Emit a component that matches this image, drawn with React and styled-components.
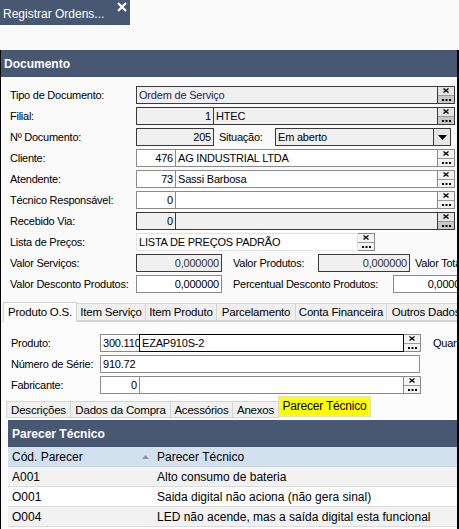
import React from 'react';
import styled, { createGlobalStyle } from 'styled-components';

const Global = createGlobalStyle`
  html, body { margin: 0; padding: 0; background: #fafafa; }
  body { font-family: "Liberation Sans", Arial, sans-serif; }
  * { box-sizing: border-box; }
`;

const SLATE = '#485872';

const Screen = styled.div`
  width: 459px;
  height: 529px;
  overflow: hidden;
  background: #fafafa;
  display: flex;
  flex-direction: column;
`;

const TopStrip = styled.div`
  height: 25px;
  flex-shrink: 0;
  display: flex;
  background: #fafafa;
`;

const DocTab = styled.div`
  position: relative;
  width: 130px;
  background: ${SLATE};
  color: #fff;
  font-size: 12px;
  display: flex;
  align-items: center;
  padding-left: 3px;
  padding-top: 2px;
`;

const CloseIcon = styled.svg`
  position: absolute;
  top: 2px;
  right: 3px;
`;

const Spacer = styled.div`
  height: 25px;
  flex-shrink: 0;
`;

const Body = styled.div`
  flex: 1;
  border-left: 1px solid #000;
  border-right: 2px solid #000;
  overflow: hidden;
  display: flex;
  flex-direction: column;
`;

const SectionBar = styled.div`
  height: 27px;
  flex-shrink: 0;
  background: ${SLATE};
  color: #fff;
  font-weight: bold;
  font-size: 12px;
  display: flex;
  align-items: center;
  padding-left: 3px;
`;

const Form = styled.div`
  display: flex;
  flex-direction: column;
  gap: 3px;
  padding: 9px 0 0 9px;
`;

const Row = styled.div`
  display: flex;
  align-items: center;
  height: 18px;
  white-space: nowrap;
`;

const Label = styled.div`
  width: ${p => p.$w}px;
  margin-left: ${p => p.$ml || 0}px;
  flex-shrink: 0;
  font-size: 11px;
  letter-spacing: -0.25px;
  color: #000;
  overflow: hidden;
`;

const Field = styled.div`
  width: ${p => p.$w}px;
  flex-shrink: 0;
  height: 18px;
  margin-left: ${p => (p.$joined ? -1 : 0)}px;
  border: 1px solid ${p => (p.$focus ? '#000' : p.$gray ? '#3a3a3a' : p.$light ? '#e2e2e2' : '#8a8a8a')};
  background: ${p => (p.$gray ? '#f0f0f0' : '#fff')};
  color: ${p => p.$color || '#000'};
  font-size: 11px;
  letter-spacing: -0.2px;
  display: flex;
  align-items: center;
  justify-content: ${p => (p.$right ? 'flex-end' : 'flex-start')};
  padding: 0 2px;
  overflow: hidden;
  white-space: nowrap;
  position: relative;
  z-index: ${p => (p.$focus ? 1 : 0)};
`;

const LookupBtn = styled.div`
  width: 18px;
  height: 18px;
  flex-shrink: 0;
  margin-left: -1px;
  border: 1px solid ${p => (p.$gray ? '#3a3a3a' : '#8a8a8a')};
  background: ${p => (p.$gray ? '#e4e4e4' : '#f4f4f4')};
  display: flex;
  flex-direction: column;
`;

const BtnHalf = styled.div`
  flex: 1;
  display: flex;
  align-items: center;
  justify-content: center;
  background: ${p => (p.$bottom && p.$gray ? '#c8c8c8' : 'transparent')};
  border-top: ${p => (p.$bottom ? '1px solid #9a9a9a' : 'none')};
`;

const Lookup = ({ gray }) => (
  <LookupBtn $gray={gray}>
    <BtnHalf $gray={gray}>
      <svg width="6" height="5" viewBox="0 0 6 5">
        <path d="M0.5 0.5 L5.5 4.5 M5.5 0.5 L0.5 4.5" stroke="#000" strokeWidth="1.3" />
      </svg>
    </BtnHalf>
    <BtnHalf $gray={gray} $bottom>
      <svg width="9" height="6" viewBox="0 0 9 6">
        <rect x="0" y="3" width="2" height="2" fill="#000" />
        <rect x="3.5" y="3" width="2" height="2" fill="#000" />
        <rect x="7" y="3" width="2" height="2" fill="#000" />
      </svg>
    </BtnHalf>
  </LookupBtn>
);

const Select = styled.div`
  width: 176px;
  height: 18px;
  flex-shrink: 0;
  border: 1px solid #3a3a3a;
  background: #f0f0f0;
  display: flex;
  font-size: 11px;
  letter-spacing: -0.2px;
`;

const SelectText = styled.div`
  flex: 1;
  display: flex;
  align-items: center;
  padding-left: 2px;
`;

const SelectArrow = styled.div`
  width: 17px;
  border-left: 1px solid #3a3a3a;
  background: #e6e6e6;
  display: flex;
  align-items: center;
  justify-content: center;
`;

/* ---------- tabs ---------- */
const TabBar = styled.div`
  display: flex;
  align-items: flex-end;
  height: 20px;
  margin-top: 9px;
  padding-left: 2px;
  border-bottom: 1px solid #d4d4d4;
  flex-shrink: 0;
`;

const Tab = styled.div`
  width: ${p => p.$w}px;
  flex-shrink: 0;
  height: ${p => (p.$active ? 20 : 18)}px;
  margin-bottom: ${p => (p.$active ? -1 : 0)}px;
  border: 1px solid #d4d4d4;
  border-bottom: ${p => (p.$active ? '1px solid #fcfcfc' : '1px solid #d4d4d4')};
  margin-left: ${p => (p.$first ? 0 : -1)}px;
  background: ${p => (p.$active ? '#fcfcfc' : '#f0f0f0')};
  font-size: 11.5px;
  letter-spacing: -0.2px;
  color: #000;
  display: flex;
  align-items: center;
  justify-content: center;
  white-space: nowrap;
  overflow: hidden;
  position: relative;
  z-index: ${p => (p.$active ? 1 : 0)};
`;

const TabPanel = styled.div`
  flex: 1;
  background: #fcfcfc;
  margin-left: 2px;
  display: flex;
  flex-direction: column;
`;

const PanelForm = styled.div`
  display: flex;
  flex-direction: column;
  gap: 3px;
  padding: 12px 0 0 8px;
`;

const SubTabBar = styled.div`
  display: flex;
  align-items: flex-end;
  height: 21px;
  margin-top: 3px;
  padding-left: 3px;
  flex-shrink: 0;
`;

const SubTab = styled.div`
  width: ${p => p.$w}px;
  flex-shrink: 0;
  height: ${p => (p.$active ? 21 : 17)}px;
  margin-bottom: ${p => (p.$active ? 1 : 0)}px;
  margin-left: ${p => (p.$first ? 0 : -1)}px;
  border: 1px solid ${p => (p.$active ? '#e0e0c0' : '#d4d4d4')};
  background: ${p => (p.$active ? '#ffff00' : '#f0f0f0')};
  font-size: ${p => (p.$active ? 12 : 11.5)}px;
  letter-spacing: -0.2px;
  color: #000;
  display: flex;
  align-items: ${p => (p.$active ? 'flex-start' : 'center')};
  padding-top: ${p => (p.$active ? 2 : 0)}px;
  justify-content: center;
  white-space: nowrap;
  overflow: hidden;
`;

const SubPanel = styled.div`
  flex: 1;
  margin-left: 5px;
  margin-top: 2px;
  display: flex;
  flex-direction: column;
  font-size: 12px;
`;

const GridTitle = styled.div`
  height: 27px;
  background: ${SLATE};
  color: #fff;
  font-weight: bold;
  font-size: 12px;
  display: flex;
  align-items: center;
  padding-left: 4px;
  flex-shrink: 0;
`;

const GridRow = styled.div`
  display: flex;
  height: 20px;
  flex-shrink: 0;
  align-items: center;
  background: ${p => (p.$head ? '#d3e1ee' : p.$alt ? '#f2f2f2' : '#ffffff')};
  border-bottom: 1px solid ${p => (p.$head ? '#c4d2de' : '#dcdcdc')};
  color: #000;
  font-size: 12px;
  white-space: nowrap;
`;

const Cell = styled.div`
  width: ${p => (p.$w ? `${p.$w}px` : 'auto')};
  flex: ${p => (p.$w ? '0 0 auto' : '1')};
  padding-left: 4px;
  display: flex;
  align-items: center;
  position: relative;
  overflow: hidden;
`;

const SortArrow = styled.svg`
  margin-left: auto;
  margin-right: 4px;
`;

const rows = [
  ['A001', 'Alto consumo de bateria'],
  ['O001', 'Saida digital não aciona (não gera sinal)'],
  ['O004', 'LED não acende, mas a saída digital esta funcional'],
];

export default function App() {
  return (
    <>
      <Global />
      <Screen>
        <TopStrip>
          <DocTab>
            Registrar Ordens...
            <CloseIcon width="10" height="10" viewBox="0 0 10 10">
              <path d="M1 1 L9 9 M9 1 L1 9" stroke="#fff" strokeWidth="2.2" />
            </CloseIcon>
          </DocTab>
        </TopStrip>
        <Spacer />
        <Body>
          <SectionBar>Documento</SectionBar>
          <Form>
            <Row>
              <Label $w={126}>Tipo de Documento:</Label>
              <Field $w={302} $gray $color="#1c1c5c">Ordem de Serviço</Field>
              <Lookup gray />
            </Row>
            <Row>
              <Label $w={126}>Filial:</Label>
              <Field $w={78} $gray $right>1</Field>
              <Field $w={225} $gray $joined>HTEC</Field>
              <Lookup gray />
            </Row>
            <Row>
              <Label $w={126}>Nº Documento:</Label>
              <Field $w={78} $gray $right>205</Field>
              <Label $w={56} $ml={5}>Situação:</Label>
              <Select>
                <SelectText>Em aberto</SelectText>
                <SelectArrow>
                  <svg width="9" height="5" viewBox="0 0 9 5">
                    <path d="M0 0 H9 L4.5 5 Z" fill="#000" />
                  </svg>
                </SelectArrow>
              </Select>
            </Row>
            <Row>
              <Label $w={126}>Cliente:</Label>
              <Field $w={40} $right>476</Field>
              <Field $w={263} $joined>AG INDUSTRIAL LTDA</Field>
              <Lookup />
            </Row>
            <Row>
              <Label $w={126}>Atendente:</Label>
              <Field $w={40} $right>73</Field>
              <Field $w={263} $joined>Sassi Barbosa</Field>
              <Lookup />
            </Row>
            <Row>
              <Label $w={126}>Técnico Responsável:</Label>
              <Field $w={40} $right>0</Field>
              <Field $w={263} $joined></Field>
              <Lookup />
            </Row>
            <Row>
              <Label $w={126}>Recebido Via:</Label>
              <Field $w={40} $gray $right>0</Field>
              <Field $w={263} $gray $joined></Field>
              <Lookup gray />
            </Row>
            <Row>
              <Label $w={126}>Lista de Preços:</Label>
              <Field $w={222} $light>LISTA DE PREÇOS PADRÃO</Field>
              <Lookup />
            </Row>
            <Row>
              <Label $w={126}>Valor Serviços:</Label>
              <Field $w={86} $gray $right $color="#333">0,000000</Field>
              <Label $w={85} $ml={11}>Valor Produtos:</Label>
              <Field $w={92} $gray $right $color="#333">0,000000</Field>
              <Label $w={60} $ml={5}>Valor Total:</Label>
            </Row>
            <Row>
              <Label $w={126}>Valor Desconto Produtos:</Label>
              <Field $w={86} $right>0,000000</Field>
              <Label $w={160} $ml={11}>Percentual Desconto Produtos:</Label>
              <Field $w={82} $right>0,000000</Field>
            </Row>
          </Form>

          <TabBar>
            <Tab $w={74} $active $first>Produto O.S.</Tab>
            <Tab $w={70}>Item Serviço</Tab>
            <Tab $w={72}>Item Produto</Tab>
            <Tab $w={80}>Parcelamento</Tab>
            <Tab $w={92}>Conta Financeira</Tab>
            <Tab $w={80}>Outros Dados</Tab>
          </TabBar>
          <TabPanel>
            <PanelForm>
              <Row>
                <Label $w={89}>Produto:</Label>
                <Field $w={40}>300.110</Field>
                <Field $w={265} $joined $focus>EZAP910S-2</Field>
                <Lookup />
                <Label $w={60} $ml={12}>Quantidade:</Label>
              </Row>
              <Row>
                <Label $w={89}>Número de Série:</Label>
                <Field $w={320}>910.72</Field>
              </Row>
              <Row>
                <Label $w={89}>Fabricante:</Label>
                <Field $w={40} $right>0</Field>
                <Field $w={265} $joined></Field>
                <Lookup />
              </Row>
            </PanelForm>
            <SubTabBar>
              <SubTab $w={65} $first>Descrições</SubTab>
              <SubTab $w={101}>Dados da Compra</SubTab>
              <SubTab $w={63}>Acessórios</SubTab>
              <SubTab $w={47}>Anexos</SubTab>
              <SubTab $w={93} $active>Parecer Técnico</SubTab>
            </SubTabBar>
            <SubPanel>
              <GridTitle>Parecer Técnico</GridTitle>
              <GridRow $head>
                <Cell $w={145}>
                  Cód. Parecer
                  <SortArrow width="7" height="4" viewBox="0 0 7 4">
                    <path d="M0 4 L3.5 0 L7 4 Z" fill="#8a96a4" />
                  </SortArrow>
                </Cell>
                <Cell>Parecer Técnico</Cell>
              </GridRow>
              {rows.map(([code, text], i) => (
                <GridRow key={code} $alt={i % 2 === 0}>
                  <Cell $w={145}>{code}</Cell>
                  <Cell>{text}</Cell>
                </GridRow>
              ))}
            </SubPanel>
          </TabPanel>
        </Body>
      </Screen>
    </>
  );
}
